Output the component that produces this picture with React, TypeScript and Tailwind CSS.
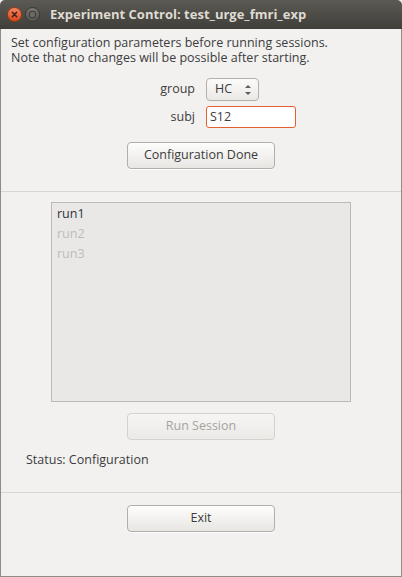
import React from 'react';

const font = { fontFamily: '"Open Sans", "Noto Sans", sans-serif' };

const Btn: React.FC<{ label: string; disabled?: boolean; className?: string }> = ({ label, disabled, className }) => (
  <div
    className={`mx-auto w-[148px] h-[27px] rounded-[4px] border flex items-center justify-center text-[12.5px] ${
      disabled
        ? 'border-[#d5d2cd] bg-gradient-to-b from-[#f6f5f4] to-[#eceae7] text-[#a6a39e]'
        : 'border-[#b3afa8] bg-gradient-to-b from-[#fdfdfc] to-[#e8e6e3] text-[#3c3c3c] shadow-[0_1px_0_rgba(255,255,255,0.8)]'
    } ${className ?? ''}`}
  >
    {label}
  </div>
);

export default function App() {
  return (
    <div className="w-[402px] h-[577px] bg-[#f2f1f0] flex flex-col overflow-hidden" style={font}>
      {/* Title bar */}
      <div className="h-[29px] shrink-0 rounded-t-[5px] bg-gradient-to-b from-[#5b5a54] to-[#3f3e3a] flex items-center pl-[7px]">
        <div className="w-[15px] h-[15px] rounded-full bg-gradient-to-b from-[#f5855a] to-[#d9461a] border border-[#9a3a16] flex items-center justify-center">
          <svg width="7" height="7" viewBox="0 0 7 7">
            <path d="M1.3 1.3 L5.7 5.7 M5.7 1.3 L1.3 5.7" stroke="#3a2018" strokeWidth="1.5" strokeLinecap="round" />
          </svg>
        </div>
        <div className="ml-[3px] w-[15px] h-[15px] rounded-full bg-gradient-to-b from-[#77766f] to-[#55544f] border border-[#3a3935] flex items-center justify-center">
          <div className="w-[7px] h-[7px] rounded-[2px] border-[1.5px] border-[#3c3b37] bg-[#6a6964]" />
        </div>
        <div className="ml-[10px] text-[13px] font-bold text-[#dfdbd2]">
          Experiment Control: test_urge_fmri_exp
        </div>
      </div>

      {/* Body */}
      <div className="flex-1 flex flex-col border-x border-b border-[#8e8c88]">
        <div className="pt-[6px] pl-[10px] text-[12.5px] leading-[15px] text-[#3c3c3c]">
          <div>Set configuration parameters before running sessions.</div>
          <div>Note that no changes will be possible after starting.</div>
        </div>

        <div className="mt-[13px] grid grid-cols-[194px_auto] gap-x-[11px] items-center text-[12.5px] text-[#3c3c3c]">
          <div className="text-right">group</div>
          <div className="w-[53px] h-[23px] rounded-[4px] border border-[#b4b0a9] bg-gradient-to-b from-[#fbfbfa] to-[#ebe9e6] flex items-center justify-between pl-[8px] pr-[6px]">
            <span>HC</span>
            <svg width="8" height="14" viewBox="0 0 8 14">
              <path d="M1 5 L4 2 L7 5 Z" fill="#5e5c58" />
              <path d="M1 9 L4 12 L7 9 Z" fill="#5e5c58" />
            </svg>
          </div>
          <div className="text-right mt-[5px]">subj</div>
          <div className="mt-[5px] w-[90px] h-[22px] rounded-[3px] border border-[#e2612f] bg-white flex items-center pl-[3px]">
            S12
          </div>
        </div>

        <Btn label="Configuration Done" className="mt-[14px]" />

        <div className="mt-[22px] h-px bg-[#d9d6d1]" />

        <div className="mt-[10px] mx-auto w-[300px] h-[200px] border border-[#bdbab4] bg-[#eae8e6] pt-[1px] pl-[5px] text-[12.5px] leading-[20px]">
          <div className="text-[#2e3436]">run1</div>
          <div className="text-[#bebbb6]">run2</div>
          <div className="text-[#bebbb6]">run3</div>
        </div>

        <Btn label="Run Session" disabled className="mt-[11px]" />

        <div className="mt-[11px] pl-[25px] text-[12.5px] text-[#3c3c3c]">Status: Configuration</div>

        <div className="mt-[22px] h-px bg-[#d9d6d1]" />

        <Btn label="Exit" className="mt-[12px]" />
      </div>
    </div>
  );
}
